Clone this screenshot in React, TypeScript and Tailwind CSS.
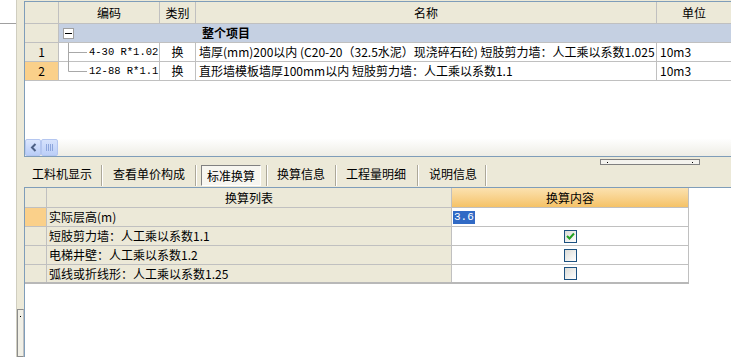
import React from 'react';

const line = 'border-[#c0c0c0]';

function TopTable() {
  const cols = 'grid grid-cols-[34px_101px_36px_461px_1fr]';
  return (
    <div className="flex h-[156px] flex-col border-b border-l border-t border-[#7f9db9] bg-white">
      {/* header */}
      <div className={`${cols} h-[22px] border-b ${line} bg-[#ece9d8]`}>
        <div className={`border-r ${line}`} />
        <div className={`flex items-center justify-center border-r ${line}`}>编码</div>
        <div className={`flex items-center justify-center border-r ${line}`}>类别</div>
        <div className={`flex items-center justify-center border-r ${line}`}>名称</div>
        <div className="flex items-center justify-center">单位</div>
      </div>
      {/* group row */}
      <div className={`${cols} h-[19px] border-b ${line}`}>
        <div className={`border-r ${line} bg-[#ece9d8]`} />
        <div className="col-span-2 flex items-center bg-[#c5d0e2] pl-[4px]">
          <div className="flex h-[11px] w-[11px] items-center justify-center border border-[#a0a0a0] bg-white">
            <div className="h-px w-[7px] bg-black" />
          </div>
        </div>
        <div className="flex items-center bg-[#c5d0e2] pl-[6px] font-bold">整个项目</div>
        <div className="bg-[#c5d0e2]" />
      </div>
      {[
        { n: '1', code: '4-30 R*1.02', name: '墙厚(mm)200以内 (C20-20（32.5水泥）现浇碎石砼) 短肢剪力墙：人工乘以系数1.025', sel: false, last: false },
        { n: '2', code: '12-88 R*1.1', name: '直形墙模板墙厚100mm以内 短肢剪力墙：人工乘以系数1.1', sel: true, last: true },
      ].map((r) => (
        <div key={r.n} className={`${cols} h-[19px] border-b ${line}`}>
          <div className={`flex items-center justify-center border-r ${line} ${r.sel ? 'bg-[#fad08a]' : 'bg-[#ece9d8]'}`}>{r.n}</div>
          <div className={`relative flex items-center border-r ${line} pl-[30px]`}>
            <svg className="absolute left-0 top-0" width="30" height="19">
              <line x1="9.5" y1="0" x2="9.5" y2={r.last ? 9.5 : 19} stroke="#a8a8a8" />
              <line x1="9.5" y1="9.5" x2="28" y2="9.5" stroke="#a8a8a8" />
            </svg>
            <span className="font-['Liberation_Mono',monospace] text-[10.5px]">{r.code}</span>
          </div>
          <div className={`flex items-center justify-center border-r ${line}`}>换</div>
          <div className={`flex items-center overflow-hidden whitespace-nowrap border-r ${line} pl-[3px]`}>{r.name}</div>
          <div className="flex items-center pl-[3px]">10m3</div>
        </div>
      ))}
      <div className="flex-1" />
      {/* horizontal scrollbar */}
      <div className="flex h-[17px] bg-gradient-to-b from-[#fefefe] to-[#eeede5]">
        <div className="flex w-[16px] items-center justify-center rounded-[2px] border border-[#b4c6f0] bg-gradient-to-b from-[#dce7fd] to-[#b9cdf7]">
          <svg width="7" height="9" viewBox="0 0 7 9">
            <path d="M5.5 1 L2 4.5 L5.5 8" fill="none" stroke="#4d6185" strokeWidth="2" />
          </svg>
        </div>
        <div className="flex w-[17px] items-center justify-center gap-px rounded-[2px] border border-[#b4c6f0] bg-gradient-to-b from-[#d6e2fc] to-[#bccff8]">
          <div className="h-[7px] w-px bg-[#8ea6dc]" />
          <div className="h-[7px] w-px bg-[#8ea6dc]" />
          <div className="h-[7px] w-px bg-[#8ea6dc]" />
          <div className="h-[7px] w-px bg-[#8ea6dc]" />
        </div>
      </div>
    </div>
  );
}

function Sep() {
  return <div className="mt-[8px] h-[21px] w-[2px] border-l border-r border-l-[#aca899] border-r-white" />;
}

function TabBar() {
  return (
    <div className="relative flex h-[30px] items-start bg-[#ece9d8]">
      <span className="ml-[8px] mt-[11px] w-[60px]">工料机显示</span>
      <div className="ml-[9px]"><Sep /></div>
      <span className="ml-[10px] mt-[11px] w-[72px]">查看单价构成</span>
      <div className="ml-[10px]"><Sep /></div>
      <div className="ml-[4px] mt-[8px] flex h-[21px] items-center border border-b-white border-l-[#808080] border-r-white border-t-[#808080] bg-[#f7f6f0] px-[5px]">标准换算</div>
      <div className="ml-[5px]"><Sep /></div>
      <span className="ml-[9px] mt-[11px] w-[48px]">换算信息</span>
      <div className="ml-[10px]"><Sep /></div>
      <span className="ml-[9px] mt-[11px] w-[60px]">工程量明细</span>
      <div className="ml-[11px]"><Sep /></div>
      <span className="ml-[10px] mt-[11px] w-[48px]">说明信息</span>
      <div className="ml-[8px]"><Sep /></div>
      <div className="absolute left-[576px] top-[2px] flex h-[6px] w-[100px] items-center justify-between border border-[#808080] bg-[#f4f3ee] px-[6px]">
        <div className="h-px w-px bg-black" />
        <div className="h-px w-px bg-black" />
      </div>
    </div>
  );
}

function Check({ on }: { on: boolean }) {
  return (
    <div className="flex h-[13px] w-[13px] items-center justify-center border border-[#1c5180] bg-gradient-to-br from-[#dcdcd7] to-white">
      {on && (
        <svg width="9" height="8" viewBox="0 0 9 8">
          <path d="M1 4 L3.5 6.5 L8 1.5" fill="none" stroke="#21a121" strokeWidth="2" />
        </svg>
      )}
    </div>
  );
}

function BottomTable() {
  const cols = 'grid w-[664px] grid-cols-[22px_405px_237px]';
  const rows = [
    { t: '实际层高(m)', kind: 'val' },
    { t: '短肢剪力墙：人工乘以系数1.1', kind: 'on' },
    { t: '电梯井壁：人工乘以系数1.2', kind: 'off' },
    { t: '弧线或折线形：人工乘以系数1.25', kind: 'off' },
  ];
  return (
    <div className="flex-1 border-l border-t border-[#7f9db9] bg-white">
      <div className={`${cols} h-[20px] border-b ${line}`}>
        <div className={`border-r ${line} bg-[#ece9d8]`} />
        <div className={`flex items-center justify-center border-r ${line} bg-[#ece9d8]`}>换算列表</div>
        <div className={`flex items-center justify-center border-r ${line} bg-gradient-to-b from-[#fbe2b0] to-[#f5c266]`}>换算内容</div>
      </div>
      {rows.map((r, i) => (
        <div key={r.t} className={`${cols} h-[19px] ${i === 3 ? 'border-b-2 border-[#b8b8b8]' : `border-b ${line}`}`}>
          <div className={`border-r ${line} ${i === 0 ? 'bg-[#fad08a]' : 'bg-[#ece9d8]'}`} />
          <div className={`flex items-center border-r ${line} bg-[#ece9d8] pl-[2px]`}>{r.t}</div>
          <div className={`flex items-center border-r ${line} ${r.kind === 'val' ? 'pl-px' : 'justify-center'}`}>
            {r.kind === 'val' && (
              <span className="bg-[#316ac5] px-px font-['Liberation_Mono',monospace] text-[11px] leading-[13px] text-white">3.6</span>
            )}
            {r.kind === 'on' && <Check on />}
            {r.kind === 'off' && <Check on={false} />}
          </div>
        </div>
      ))}
    </div>
  );
}

export default function App() {
  return (
    <div className="flex h-[357px] w-[731px] overflow-hidden bg-white font-['Noto_Sans_CJK_SC','Liberation_Sans',sans-serif] text-[12px] leading-none text-black">
      <div className="w-[16px] shrink-0">
        <div className="h-[24px] border-b border-[#a0a0a0]" />
      </div>
      <div className="flex w-[8px] shrink-0 flex-col border-l border-[#d0cec0] bg-[#ece9d8]">
        <div className="h-[309px]" />
        <div className="flex-1 border border-[#8c8c8c] border-r-[#c0c0c0] bg-[#f0efe6]">
          <div className="ml-[2px] mt-[6px] h-px w-px bg-black" />
        </div>
      </div>
      <div className="flex min-w-0 flex-1 flex-col bg-[#ece9d8] pt-px">
        <TopTable />
        <TabBar />
        <BottomTable />
      </div>
    </div>
  );
}
